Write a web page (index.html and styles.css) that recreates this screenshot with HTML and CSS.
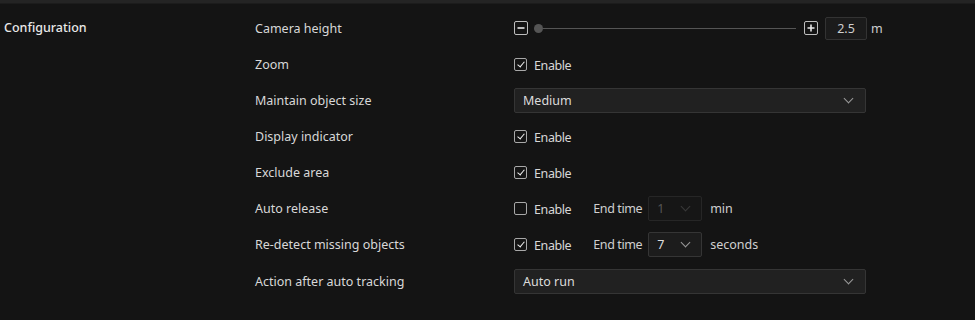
FILE: index.html
```html
<!DOCTYPE html>
<html>
<head>
<meta charset="utf-8">
<link rel="stylesheet" href="styles.css">
</head>
<body>
<div class="topbar"></div>
<section class="config">
  <div class="section-title">Configuration</div>
  <div class="rows">
    <div class="row">
      <div class="label">Camera height</div>
      <div class="control">
        <span class="step"><svg width="10" height="10" viewBox="0 0 10 10"><path d="M1.5 5h7" stroke="#e6e6e6" stroke-width="1.6"/></svg></span>
        <div class="slider"><span class="thumb"></span><span class="track"></span></div>
        <span class="step"><svg width="10" height="10" viewBox="0 0 10 10"><path d="M1.5 5h7M5 1.5v7" stroke="#e6e6e6" stroke-width="1.6"/></svg></span>
        <span class="numbox">2.5</span>
        <span class="unit">m</span>
      </div>
    </div>
    <div class="row">
      <div class="label">Zoom</div>
      <div class="control"><span class="check on"></span><span class="opt">Enable</span></div>
    </div>
    <div class="row">
      <div class="label">Maintain object size</div>
      <div class="control"><div class="select wide"><span>Medium</span><span class="chev"></span></div></div>
    </div>
    <div class="row">
      <div class="label">Display indicator</div>
      <div class="control"><span class="check on"></span><span class="opt">Enable</span></div>
    </div>
    <div class="row">
      <div class="label">Exclude area</div>
      <div class="control"><span class="check on"></span><span class="opt">Enable</span></div>
    </div>
    <div class="row">
      <div class="label">Auto release</div>
      <div class="control"><span class="check"></span><span class="opt">Enable</span>
        <span class="endlabel">End time</span>
        <div class="select small disabled"><span>1</span><span class="chev"></span></div>
        <span class="unit2">min</span>
      </div>
    </div>
    <div class="row">
      <div class="label">Re-detect missing objects</div>
      <div class="control"><span class="check on"></span><span class="opt">Enable</span>
        <span class="endlabel">End time</span>
        <div class="select small"><span>7</span><span class="chev"></span></div>
        <span class="unit2">seconds</span>
      </div>
    </div>
    <div class="row">
      <div class="label">Action after auto tracking</div>
      <div class="control"><div class="select wide"><span>Auto run</span><span class="chev"></span></div></div>
    </div>
  </div>
</section>
</body>
</html>
```
FILE: styles.css
```css
html, body {
  margin: 0;
  padding: 0;
  background: #141414;
  width: 975px;
  height: 320px;
  overflow: hidden;
  font-family: "Noto Sans", "Open Sans", sans-serif;
  font-size: 12.5px;
  color: #dcdcdc;
}
.topbar {
  height: 3px;
  background: #242424;
  border-bottom: 1px solid #1c1c1c;
}
.config {
  display: flex;
  padding-top: 6px;
}
.section-title {
  width: 255px;
  padding-left: 4px;
  box-sizing: border-box;
  font-weight: 500;
  color: #e8e8e8;
  line-height: 36px;
}
.rows {
  display: flex;
  flex-direction: column;
}
.row {
  display: flex;
  align-items: center;
  height: 36px;
}
.row:last-child { height: 38px; }
.label {
  width: 259px;
  color: #d8d8d8;
}
.control {
  display: flex;
  align-items: center;
}
.step {
  width: 12px;
  height: 12px;
  border: 1px solid #bdbdbd;
  border-radius: 2px;
  display: flex;
  align-items: center;
  justify-content: center;
  box-sizing: content-box;
}
.slider {
  width: 262px;
  display: flex;
  align-items: center;
  margin: 0 8px 0 6px;
}
.thumb {
  width: 9px;
  height: 9px;
  border-radius: 50%;
  background: #555;
  flex: none;
}
.track {
  flex: 1;
  height: 1px;
  background: #555;
}
.numbox {
  width: 40px;
  height: 21px;
  margin-left: 7px;
  border: 1px solid #333;
  background: #1b1b1b;
  border-radius: 2px;
  display: flex;
  align-items: center;
  justify-content: center;
  color: #cfcfcf;
}
.unit {
  margin-left: 4px;
  color: #cfcfcf;
}
.check {
  width: 11px;
  height: 11px;
  border: 1px solid #a8a8a8;
  border-radius: 2px;
  position: relative;
  box-sizing: content-box;
}
.check.on::after {
  content: "";
  position: absolute;
  left: 3.5px;
  top: 1px;
  width: 3px;
  height: 6px;
  border: solid #f0f0f0;
  border-width: 0 1.6px 1.6px 0;
  transform: rotate(40deg);
}
.opt {
  margin-left: 7px;
  color: #d8d8d8;
  position: relative;
  top: 1px;
  letter-spacing: -0.4px;
}
.select {
  background: #212121;
  border: 1px solid #353535;
  border-radius: 2px;
  display: flex;
  align-items: center;
  justify-content: space-between;
  box-sizing: border-box;
  padding: 0 13px 0 8px;
  color: #dcdcdc;
}
.select.wide {
  width: 352px;
  height: 25px;
}
.select.small {
  width: 54px;
  height: 25px;
  padding: 0 12px 0 8px;
  background: #1c1c1c;
}
.select.disabled {
  background: #161616;
  border-color: #262626;
  color: #555;
}
.chev {
  width: 6px;
  height: 6px;
  border: solid #9a9a9a;
  border-width: 0 1.3px 1.3px 0;
  transform: rotate(45deg);
  margin-top: -4px;
}
.disabled .chev { border-color: #3a3a3a; }
.endlabel {
  margin-left: 22px;
  margin-right: 6px;
  color: #d0d0d0;
  letter-spacing: -0.4px;
}
.unit2 {
  margin-left: 8px;
  color: #d0d0d0;
}
```
